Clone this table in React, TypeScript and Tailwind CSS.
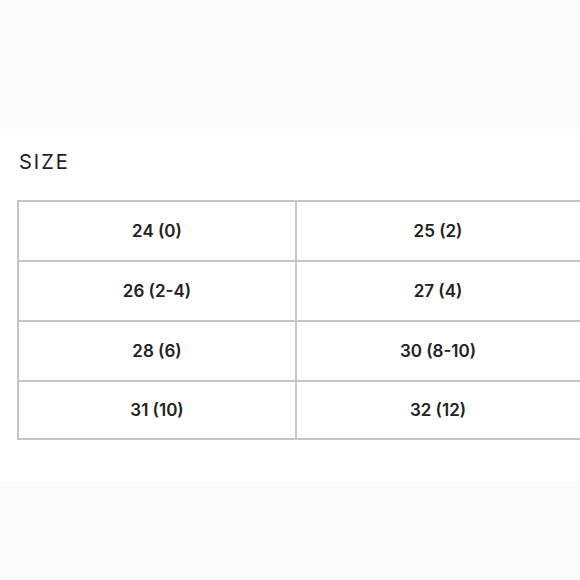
export default function App() {
  const rows = [
    ['24 (0)', '25 (2)'],
    ['26 (2-4)', '27 (4)'],
    ['28 (6)', '30 (8-10)'],
    ['31 (10)', '32 (12)'],
  ];

  return (
    <div className="w-[580px] h-[580px] overflow-hidden bg-white flex flex-col" style={{ fontFamily: 'Inter, "Liberation Sans", sans-serif' }}>
      <div className="h-[130px] bg-[#fbfbfb]" />
      <div className="h-[352px] bg-white pl-[17px]">
        <div className="pt-[20px] pl-[2px] text-[20px] leading-[24px] tracking-[0.1em] text-[#1e1e1e]">SIZE</div>
        <div className="mt-[26px] w-[620px] border-2 border-[#c6c6c6] grid grid-cols-[278px_1fr]">
          {rows.map((r, i) => {
            const last = i === rows.length - 1;
            return (
              <div key={i} className="contents">
                <div className={`${last ? 'h-[56px]' : 'h-[60px] border-b-2'} flex items-center justify-center pt-[2px] border-r-2 border-[#c6c6c6] text-[17px] font-semibold text-[#222]`}>
                  {r[0]}
                </div>
                <div className={`${last ? 'h-[56px]' : 'h-[60px] border-b-2'} flex items-center pt-[2px] pl-[141px] border-[#c6c6c6] text-[17px] font-semibold text-[#222]`}>
                  <span className="-translate-x-1/2">{r[1]}</span>
                </div>
              </div>
            );
          })}
        </div>
      </div>
      <div className="flex-1 bg-[#fafafa]" />
    </div>
  );
}
